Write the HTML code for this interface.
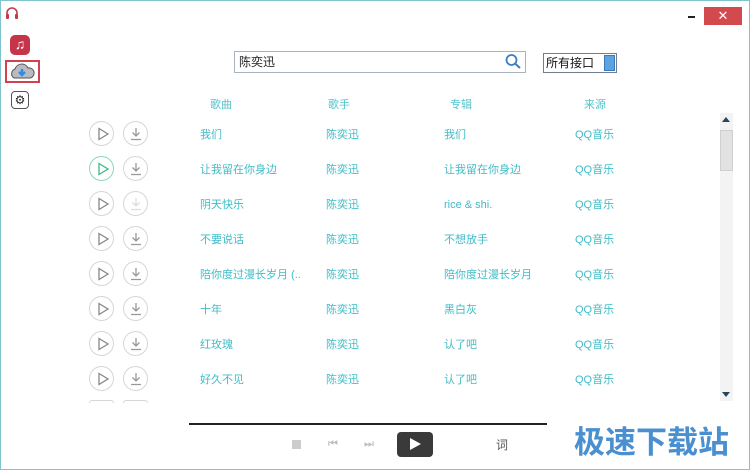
<!DOCTYPE html>
<html><head><meta charset="utf-8"><style>
*{margin:0;padding:0;box-sizing:border-box}
body{width:750px;height:470px;overflow:hidden;background:#fff;font-family:"Liberation Sans","Noto Sans CJK SC",sans-serif;position:relative}
.frame{position:absolute;left:0;top:0;width:750px;height:470px;border:1px solid #7fc4cf}
.a{position:absolute}
.t{position:absolute;font-size:11px;color:#3fbcc6;line-height:14px;white-space:nowrap}
.h{color:#52c3cc}
.c{position:absolute;width:25px;height:25px;border:1px solid #d6d6d6;border-radius:50%}
</style></head><body>
<div class="frame"></div>
<svg class="a" style="left:4px;top:6px" width="16" height="14" viewBox="0 0 16 14"><path d="M3 10 V7 A5 5 0 0 1 13 7 V10" fill="none" stroke="#c23a4a" stroke-width="1.6"/><rect x="2" y="8" width="3" height="5" rx="1" fill="#c23a4a"/><rect x="11" y="8" width="3" height="5" rx="1" fill="#c23a4a"/></svg>
<div class="a" style="left:10px;top:35px;width:20px;height:20px;border-radius:5px;background:#c6344a"></div>
<div class="a" style="left:13px;top:35px;width:14px;height:18px;color:#fff;font-size:14px;line-height:18px;text-align:center">♫</div>
<div class="a" style="left:5px;top:60px;width:35px;height:23px;border:2px solid #d2414f"></div>
<svg class="a" style="left:9px;top:63px" width="26" height="17" viewBox="0 0 26 17"><path d="M5 15 A5 5 0 0 1 6 6 A7 7 0 0 1 19 5 A5 5 0 0 1 21 15 Z" fill="#b8bcc2" stroke="#555" stroke-width="1"/><path d="M13 6 V12 M10 9 L13 12 L16 9" stroke="#2f8de0" stroke-width="2.4" fill="none"/></svg>
<div class="a" style="left:11px;top:91px;width:18px;height:18px;border:1px solid #555;border-radius:4px;font-size:12px;line-height:16px;text-align:center;color:#222">⚙</div>
<div class="a" style="left:688px;top:16px;width:7px;height:2px;background:#222"></div>
<div class="a" style="left:704px;top:7px;width:38px;height:18px;background:#d2494e;color:#fff;font-size:13px;line-height:18px;text-align:center">✕</div>
<div class="a" style="left:234px;top:51px;width:292px;height:22px;border:1px solid #a9b3bd;background:#fff"></div>
<div class="t" style="left:239px;top:55px;color:#222;font-size:12px">陈奕迅</div>
<svg class="a" style="left:504px;top:53px" width="18" height="17" viewBox="0 0 18 17"><circle cx="7.5" cy="7" r="5" fill="none" stroke="#3b7fc0" stroke-width="1.8"/><path d="M11 10.5 L16 15" stroke="#3b7fc0" stroke-width="2"/></svg>
<div class="a" style="left:543px;top:53px;width:74px;height:20px;border:1px solid #6f7f8f;background:#fff"></div>
<div class="t" style="left:546px;top:56px;color:#111;font-size:12px">所有接口</div>
<div class="a" style="left:604px;top:55px;width:11px;height:16px;background:#5fa2e0;border:1px solid #3a78c0"></div>
<div class="t h" style="left:210px;top:98px">歌曲</div>
<div class="t h" style="left:328px;top:98px">歌手</div>
<div class="t h" style="left:450px;top:98px">专辑</div>
<div class="t h" style="left:584px;top:98px">来源</div>
<div id="rows"></div>
<script>
var d=[["我们","我们"],["让我留在你身边","让我留在你身边"],["阴天快乐","rice &amp; shi."],["不要说话","不想放手"],["陪你度过漫长岁月 (..","陪你度过漫长岁月"],["十年","黑白灰"],["红玫瑰","认了吧"],["好久不见","认了吧"]];
var h="";
for(var i=0;i<d.length;i++){var y=134+i*35;
var g=i==1;
h+='<div class="c" style="left:89px;top:'+(y-13)+'px;border-color:'+(g?'#8fd6b6':'#d6d6d6')+'"></div>';
h+='<svg class="a" style="left:96px;top:'+(y-7)+'px" width="14" height="14" viewBox="0 0 14 14"><path d="M3 1.5 L12 7 L3 12.5 Z" fill="none" stroke="'+(g?'#3cb98a':'#888')+'" stroke-width="1.3"/></svg>';
h+='<div class="c" style="left:123px;top:'+(y-13)+'px"></div>';
h+='<svg class="a" style="left:129px;top:'+(y-7)+'px" width="14" height="14" viewBox="0 0 14 14"><path d="M7 1 V9 M3.5 5.5 L7 9 L10.5 5.5 M2 12.5 H12" fill="none" stroke="'+(i==2?'#ddd':'#999')+'" stroke-width="1.3"/></svg>';
h+='<div class="t" style="left:200px;top:'+(y-6)+'px">'+d[i][0]+'</div>';
h+='<div class="t" style="left:326px;top:'+(y-6)+'px">陈奕迅</div>';
h+='<div class="t" style="left:444px;top:'+(y-6)+'px">'+d[i][1]+'</div>';
h+='<div class="t" style="left:575px;top:'+(y-6)+'px">QQ音乐</div>';}
h+='<div class="c" style="left:89px;top:400px;height:3px;border-bottom:none;border-radius:12px 12px 0 0"></div><div class="c" style="left:123px;top:400px;height:3px;border-bottom:none;border-radius:12px 12px 0 0"></div>';
document.getElementById("rows").innerHTML=h;
</script>
<div class="a" style="left:720px;top:113px;width:13px;height:288px;background:#f3f3f3"></div>
<div class="a" style="left:722px;top:117px;width:0;height:0;border-left:4px solid transparent;border-right:4px solid transparent;border-bottom:5px solid #24475e"></div>
<div class="a" style="left:720px;top:130px;width:13px;height:41px;background:#e2e2e2;border:1px solid #cfcfcf"></div>
<div class="a" style="left:722px;top:392px;width:0;height:0;border-left:4px solid transparent;border-right:4px solid transparent;border-top:5px solid #24475e"></div>
<div class="a" style="left:189px;top:423px;width:358px;height:2px;background:#222"></div>
<div class="a" style="left:292px;top:440px;width:9px;height:9px;background:#ccc"></div>
<div class="a" style="left:328px;top:438px;color:#bbb;font-size:11px">⏮</div>
<div class="a" style="left:364px;top:438px;color:#bbb;font-size:11px">⏭</div>
<div class="a" style="left:397px;top:432px;width:36px;height:25px;border-radius:4px;background:#3a3a3a"></div>
<div class="a" style="left:410px;top:438px;width:0;height:0;border-top:6.5px solid transparent;border-bottom:6.5px solid transparent;border-left:11px solid #fff"></div>
<div class="t" style="left:496px;top:438px;color:#555;font-size:12px">词</div>
<div class="a" style="left:574px;top:420px;font-size:31px;font-weight:bold;color:#4a8fd0;line-height:40px;font-family:'Noto Sans CJK SC',sans-serif">极速下载站</div>
</body></html>
